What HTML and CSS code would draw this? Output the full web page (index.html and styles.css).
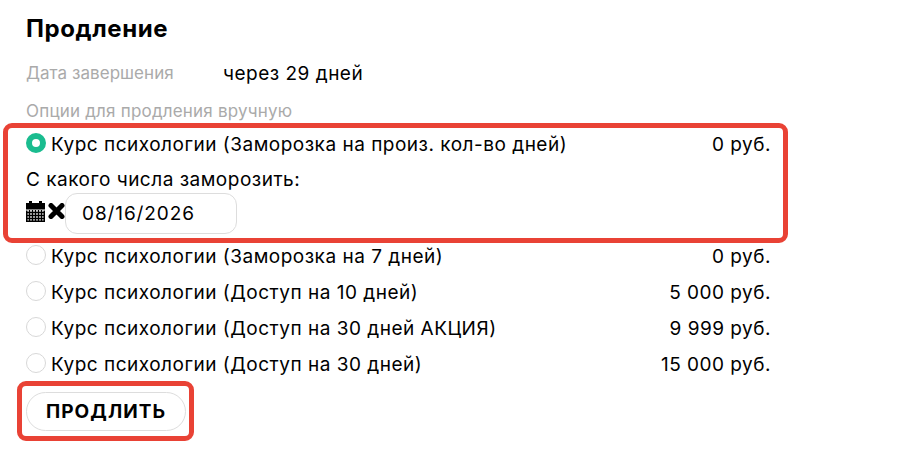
FILE: index.html
```html
<!DOCTYPE html>
<html lang="ru">
<head>
<meta charset="utf-8">
<title>Продление</title>
<link rel="stylesheet" href="styles.css">
</head>
<body>
<main class="panel">
  <h2 class="title">Продление</h2>
  <div class="info">
    <span class="muted info-label">Дата завершения</span>
    <span>через 29 дней</span>
  </div>
  <div class="muted options-label">Опции для продления вручную</div>
  <div class="option first">
    <span class="radio checked"></span>
    <span class="name">Курс психологии (Заморозка на произ. кол-во дней)</span>
    <span class="price">0 руб.</span>
  </div>
  <div class="freeze">
    <div class="freeze-label">С какого числа заморозить:</div>
    <div class="freeze-row">
      <svg class="icon cal" viewBox="0 0 19 21" width="19" height="21"><path fill="#000" d="M3 0h3v2h7V0h3v2h3v6.500H0V2h3zM0 9.500h1.500V19.500h16V9.500H19V21H0z"/><path fill="none" stroke="#000" stroke-width="1.400" d="M1 11.500h17M1 14.500h17M1 17.500h17M3.500 9v11M6.500 9v11M9.500 9v11M12.500 9v11M15.500 9v11"/></svg>
      <svg class="icon cross" viewBox="0 0 17 16" width="17" height="16"><path fill="none" stroke="#000" stroke-width="5" stroke-linecap="round" d="M3 2.500l11 11M14 2.500l-11 11"/></svg>
      <div class="date">08/16/2026</div>
    </div>
  </div>
  <div class="option"><span class="radio"></span><span class="name">Курс психологии (Заморозка на 7 дней)</span><span class="price">0 руб.</span></div>
  <div class="option"><span class="radio"></span><span class="name">Курс психологии (Доступ на 10 дней)</span><span class="price">5 000 руб.</span></div>
  <div class="option"><span class="radio"></span><span class="name">Курс психологии (Доступ на 30 дней АКЦИЯ)</span><span class="price">9 999 руб.</span></div>
  <div class="option"><span class="radio"></span><span class="name">Курс психологии (Доступ на 30 дней)</span><span class="price">15 000 руб.</span></div>
  <button class="extend" type="button">ПРОДЛИТЬ</button>
</main>
<div class="mark mark-option"></div>
<div class="mark mark-button"></div>
</body>
</html>
```
FILE: styles.css
```css
* { box-sizing: border-box; }
html, body { margin: 0; background: #fff; }
body {
  font-family: "Inter", "Liberation Sans", sans-serif;
  font-size: 19px;
  letter-spacing: 0.5px;
  color: #000;
  width: 902px;
  height: 452px;
  overflow: hidden;
  position: relative;
}
.panel { width: 772px; margin-left: 26px; padding-top: 14px; }
.title { margin: 0; font-size: 24px; font-weight: 700; line-height: 30px; letter-spacing: 0.6px; }
.muted { color: #aaaaaa; font-size: 17px; letter-spacing: 0.2px; }
.info { display: flex; align-items: center; height: 30px; margin-top: 14px; }
.info .info-label { width: 197px; letter-spacing: 0.05px; flex: none; }
.options-label { height: 24px; line-height: 24px; margin-top: 11px; }
.option { display: flex; align-items: center; height: 36px; }
.option.first { margin-top: 2px; }
.name { flex: 1; position: relative; top: 1px; }
.radio {
  width: 20px; height: 20px; border-radius: 50%;
  border: 1.500px solid #d8d8d8; margin-right: 5px; flex: none;
}
.radio.checked { border: 6px solid #1abc8f; background: #fff; }
.price { width: 130px; text-align: right; margin-right: 27px; position: relative; top: 1px; }
.freeze-label { height: 30px; line-height: 30px; margin-top: 4px; }
.freeze-row { display: flex; align-items: center; height: 41px; margin-bottom: 3px; margin-top: -2px; }
.icon { flex: none; }
.cal { margin-right: 3px; margin-top: -4px; }
.cross { margin-top: -5px; }
.date {
  width: 172px; height: 41px; line-height: 39px; padding-left: 16px;
  border: 1px solid #dddddd; border-radius: 12px; letter-spacing: 0.9px;
}
.extend {
  display: block; width: 160px; height: 39px; margin-top: 11px; padding: 0;
  font: 700 19px "Inter", "Liberation Sans", sans-serif; letter-spacing: 1px;
  color: #000; background: #fff; border: 1px solid #dddddd; border-radius: 20px;
}
.mark { position: absolute; border: 5px solid #e94235; border-radius: 9px; }
.mark-option { left: 3px; top: 123px; width: 785px; height: 120px; }
.mark-button { left: 17px; top: 381px; width: 177px; height: 60px; }
```
